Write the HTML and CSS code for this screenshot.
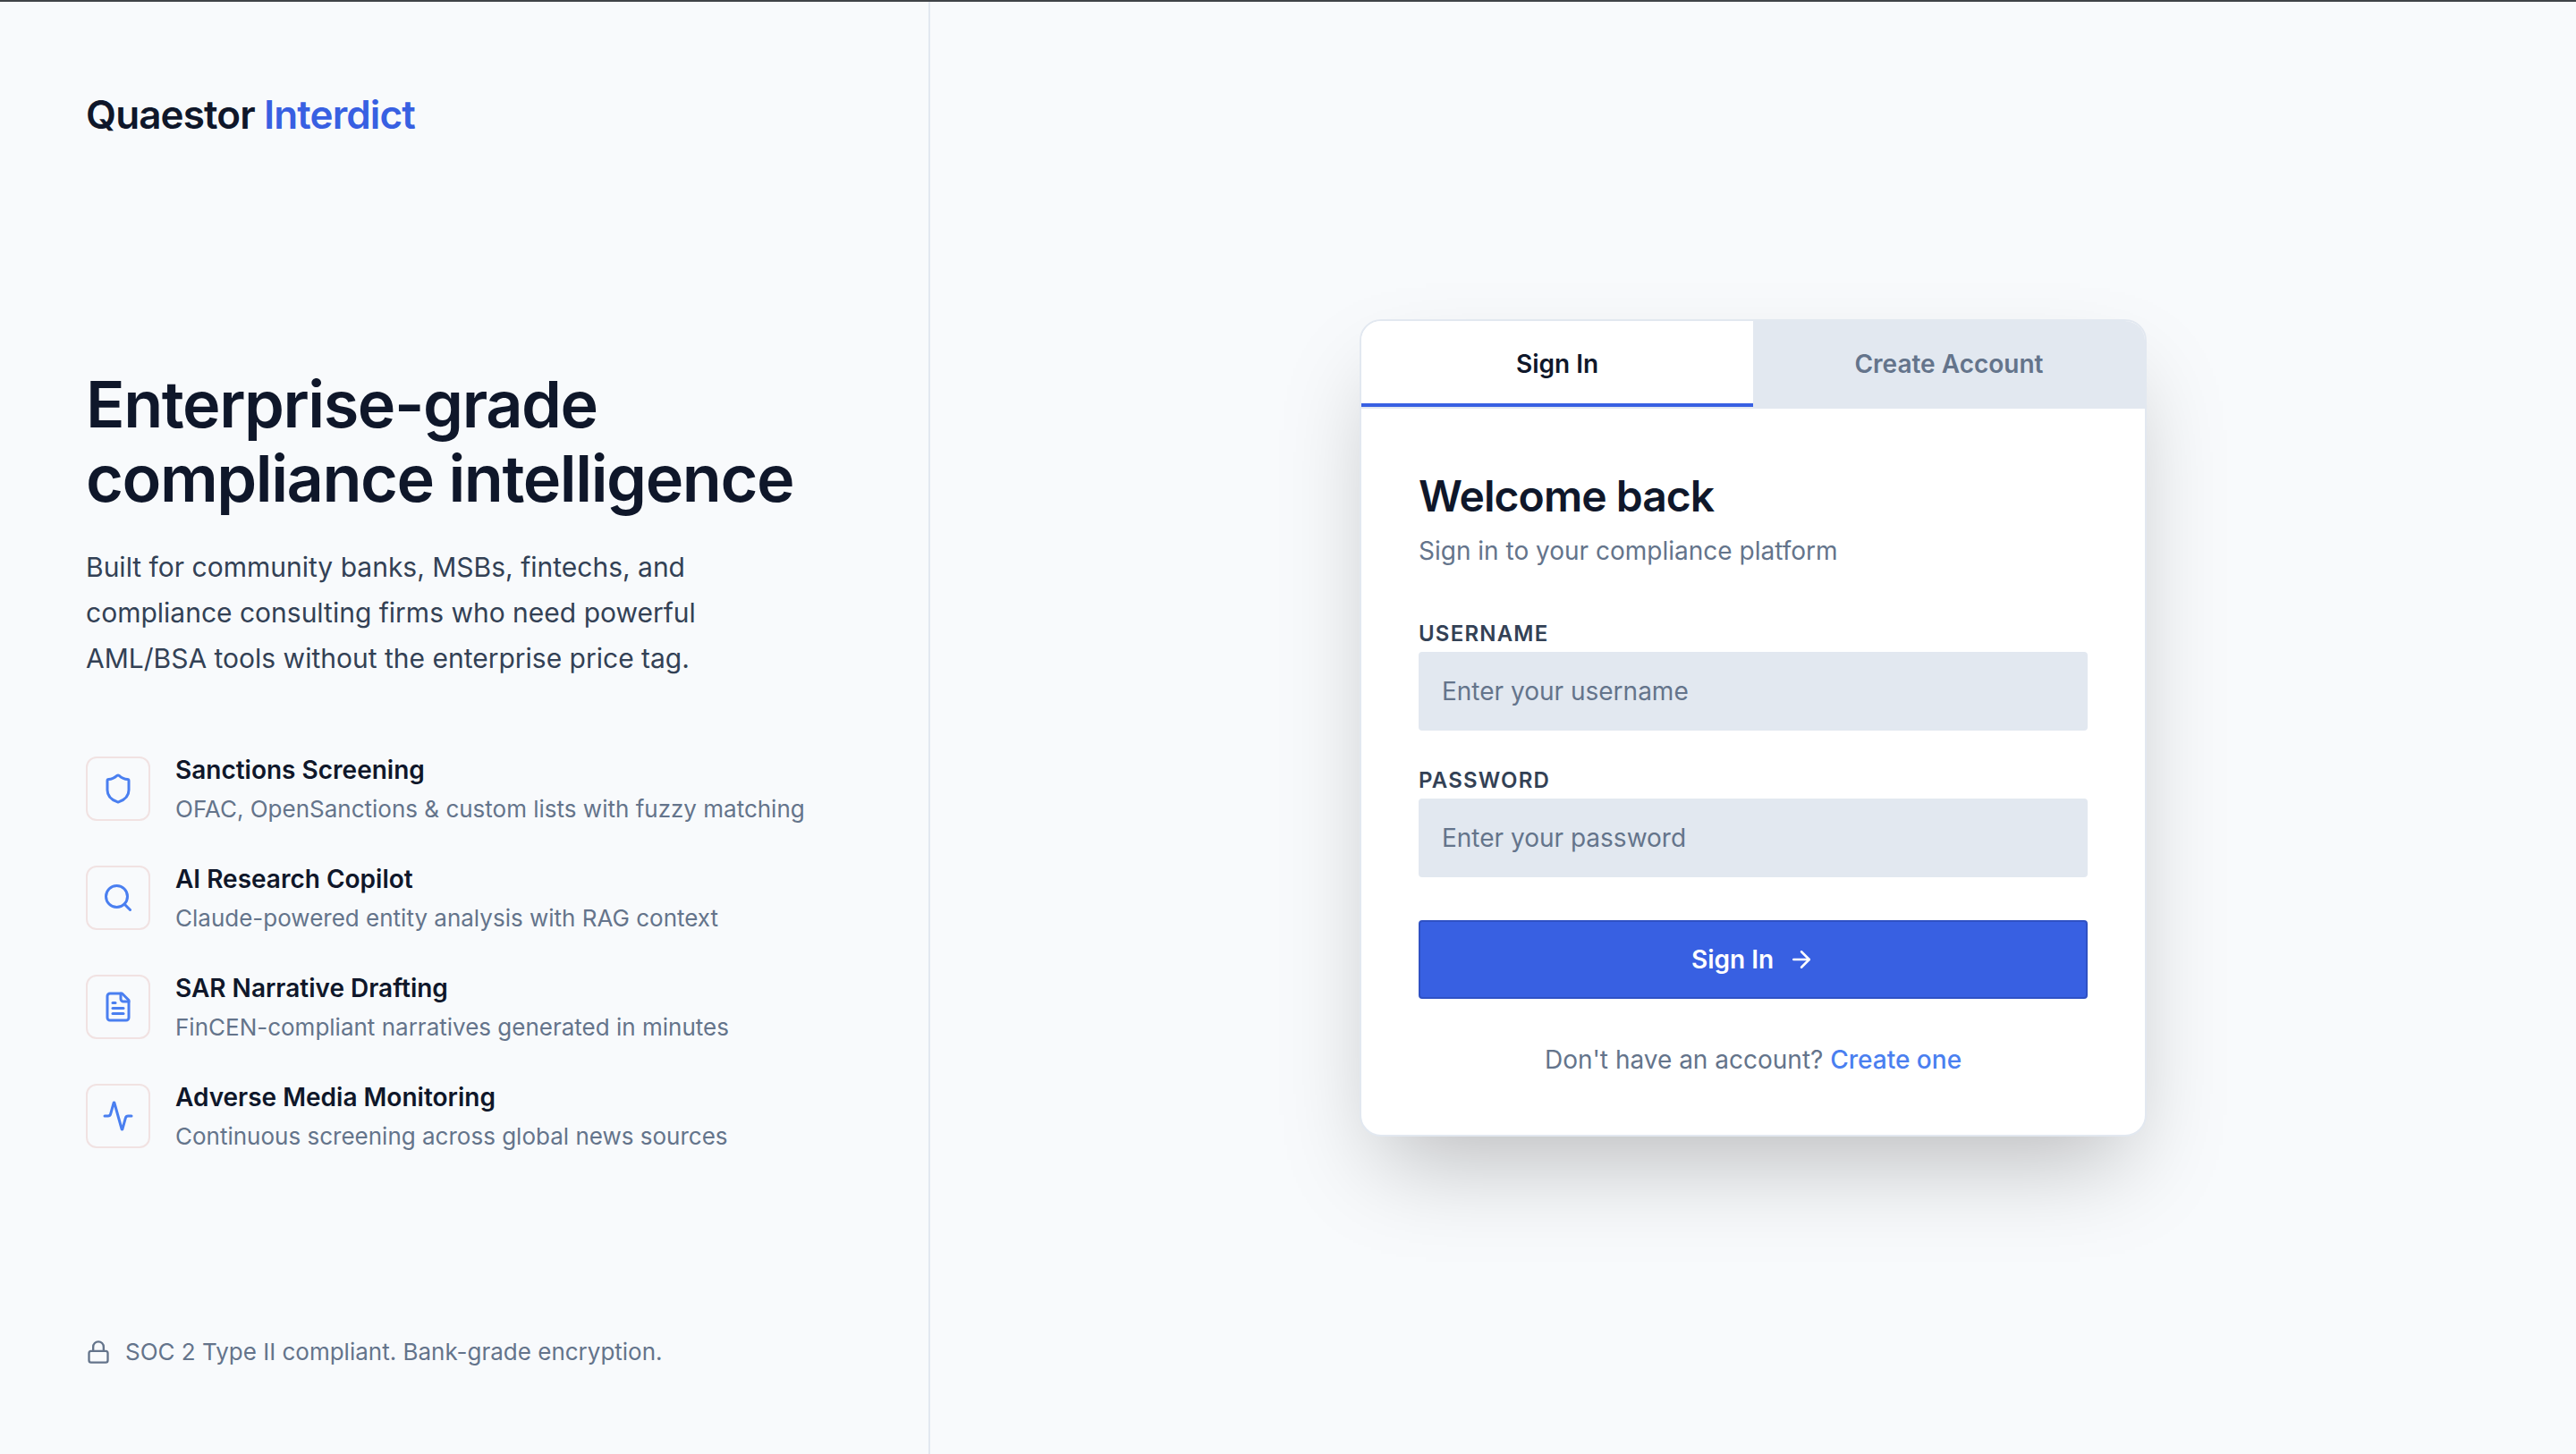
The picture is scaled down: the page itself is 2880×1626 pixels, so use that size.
FILE: index.html
```html
<!DOCTYPE html>
<html lang="en">
<head>
    <meta charset="UTF-8">
    <meta name="viewport" content="width=device-width, initial-scale=1.0">
    <title>Quaestor Interdict - Sign In</title>
    <link rel="stylesheet" href="styles.css">
</head>
<body>
    <div class="page">
        <aside class="brand-panel">
            <div class="logo">Quaestor <span class="logo-accent">Interdict</span></div>
            <div class="hero">
                <h1>Enterprise-grade<br>compliance intelligence</h1>
                <p class="hero-text">Built for community banks, MSBs, fintechs, and<br>compliance consulting firms who need powerful<br>AML/BSA tools without the enterprise price tag.</p>
                <ul class="features">
                    <li class="feature">
                        <span class="feature-icon">
                            <svg viewBox="0 0 24 24"><path d="M20 13c0 5-3.5 7.5-7.66 8.95a1 1 0 0 1-.67-.01C7.5 20.5 4 18 4 13V6a1 1 0 0 1 1-1c2 0 4.5-1.2 6.24-2.72a1.17 1.17 0 0 1 1.52 0C14.51 3.81 17 5 19 5a1 1 0 0 1 1 1z"/></svg>
                        </span>
                        <div>
                            <div class="feature-title">Sanctions Screening</div>
                            <div class="feature-text">OFAC, OpenSanctions &amp; custom lists with fuzzy matching</div>
                        </div>
                    </li>
                    <li class="feature">
                        <span class="feature-icon">
                            <svg viewBox="0 0 24 24"><circle cx="11" cy="11" r="8"/><path d="m21 21-4.3-4.3"/></svg>
                        </span>
                        <div>
                            <div class="feature-title">AI Research Copilot</div>
                            <div class="feature-text">Claude-powered entity analysis with RAG context</div>
                        </div>
                    </li>
                    <li class="feature">
                        <span class="feature-icon">
                            <svg viewBox="0 0 24 24"><path d="M15 2H6a2 2 0 0 0-2 2v16a2 2 0 0 0 2 2h12a2 2 0 0 0 2-2V7Z"/><path d="M14 2v4a2 2 0 0 0 2 2h4"/><path d="M10 9H8"/><path d="M16 13H8"/><path d="M16 17H8"/></svg>
                        </span>
                        <div>
                            <div class="feature-title">SAR Narrative Drafting</div>
                            <div class="feature-text">FinCEN-compliant narratives generated in minutes</div>
                        </div>
                    </li>
                    <li class="feature">
                        <span class="feature-icon">
                            <svg viewBox="0 0 24 24"><path d="M22 12h-2.48a2 2 0 0 0-1.93 1.46l-2.35 8.36a.25.25 0 0 1-.48 0L9.24 2.18a.25.25 0 0 0-.48 0l-2.35 8.36A2 2 0 0 1 4.49 12H2"/></svg>
                        </span>
                        <div>
                            <div class="feature-title">Adverse Media Monitoring</div>
                            <div class="feature-text">Continuous screening across global news sources</div>
                        </div>
                    </li>
                </ul>
            </div>
            <div class="compliance-note">
                <svg viewBox="0 0 24 24"><rect x="3" y="11" width="18" height="11" rx="2" ry="2"/><path d="M7 11V7a5 5 0 0 1 10 0v4"/></svg>
                SOC 2 Type II compliant. Bank-grade encryption.
            </div>
        </aside>
        <main class="form-panel">
            <div class="card">
                <div class="tabs">
                    <button type="button" class="tab tab-active">Sign In</button>
                    <button type="button" class="tab">Create Account</button>
                </div>
                <form class="card-body">
                    <h2>Welcome back</h2>
                    <p class="card-subtitle">Sign in to your compliance platform</p>
                    <label class="field-label" for="username">Username</label>
                    <input class="field-input" id="username" type="text" placeholder="Enter your username">
                    <label class="field-label" for="password">Password</label>
                    <input class="field-input" id="password" type="password" placeholder="Enter your password">
                    <button type="button" class="submit-button">
                        Sign In
                        <svg viewBox="0 0 24 24"><path d="M5 12h14"/><path d="m12 5 7 7-7 7"/></svg>
                    </button>
                    <p class="switch-text">Don't have an account? <a href="#">Create one</a></p>
                </form>
            </div>
        </main>
    </div>
</body>
</html>
```

FILE: styles.css
```css
* {
    box-sizing: border-box;
}
body {
    font-family: Inter, "Noto Sans", sans-serif;
    background-color: #f8fafc;
    color: #0f172a;
    margin: 0;
    padding: 0;
}
svg {
    fill: none;
    stroke: currentColor;
    stroke-width: 2;
    stroke-linecap: round;
    stroke-linejoin: round;
}
.page {
    display: flex;
    height: 1626px;
    border-top: 2px solid #3f4347;
}
.brand-panel {
    width: 1040px;
    flex-shrink: 0;
    display: flex;
    flex-direction: column;
    padding: 96px;
    border-right: 2px solid #e2e8f0;
}
.logo {
    font-size: 44px;
    font-weight: 600;
    line-height: 60px;
    letter-spacing: -0.88px;
    margin-bottom: 45px;
}
.logo-accent {
    color: #3860e2;
}
.hero {
    margin: auto 0;
}
h1 {
    font-size: 72px;
    font-weight: 600;
    line-height: 83px;
    letter-spacing: -1.44px;
    margin: 0 0 33px;
}
.hero-text {
    font-size: 30px;
    line-height: 51px;
    color: #334155;
    margin: 0 0 84px;
}
.features {
    list-style: none;
    margin: 0;
    padding: 0;
    display: flex;
    flex-direction: column;
    gap: 47px;
}
.feature {
    display: flex;
    gap: 28px;
}
.feature-icon {
    width: 72px;
    height: 72px;
    flex-shrink: 0;
    display: flex;
    align-items: center;
    justify-content: center;
    border: 2px solid #f1e2e2;
    border-radius: 12px;
    color: #4a7ff0;
}
.feature-icon svg {
    width: 36px;
    height: 36px;
}
.feature-title {
    font-size: 28px;
    font-weight: 600;
    line-height: 30px;
    margin-bottom: 13px;
}
.feature-text {
    font-size: 26px;
    line-height: 32px;
    color: #64748b;
}
.compliance-note {
    display: flex;
    align-items: center;
    gap: 16px;
    font-size: 26px;
    line-height: 36px;
    color: #64748b;
}
.compliance-note svg {
    width: 28px;
    height: 28px;
}
.form-panel {
    flex: 1;
    display: flex;
    align-items: center;
    justify-content: center;
}
.card {
    width: 880px;
    background-color: white;
    border: 2px solid #e2e8f0;
    border-radius: 24px;
    overflow: hidden;
    box-shadow: 0 50px 100px -24px rgba(0, 0, 0, 0.25);
}
.tabs {
    display: grid;
    grid-template-columns: 1fr 1fr;
    border-bottom: 2px solid #e2e8f0;
}
.tab {
    height: 96px;
    font-family: inherit;
    font-size: 28px;
    font-weight: 600;
    color: #64748b;
    background-color: #e2e8f0;
    border: none;
    border-bottom: 4px solid transparent;
    padding: 4px 0 0;
}
.tab-active {
    color: #0f172a;
    background-color: white;
    border-bottom-color: #3860e2;
}
.card-body {
    display: flex;
    flex-direction: column;
    padding: 64px;
}
h2 {
    font-size: 48px;
    font-weight: 600;
    line-height: 68px;
    letter-spacing: -0.96px;
    margin: 0 0 8px;
}
.card-subtitle {
    font-size: 28px;
    line-height: 38px;
    color: #64748b;
    margin: 0 0 58px;
}
.field-label {
    font-size: 24px;
    font-weight: 600;
    line-height: 32px;
    letter-spacing: 1.2px;
    text-transform: uppercase;
    color: #334155;
    margin-bottom: 4px;
}
.field-input {
    height: 88px;
    margin-bottom: 40px;
    padding: 0 24px;
    font-family: inherit;
    font-size: 28px;
    color: #0f172a;
    background-color: #e2e8f0;
    border: 2px solid #e2e8f0;
    border-radius: 4px;
}
.field-input::placeholder {
    color: #64748b;
    opacity: 1;
}
.submit-button {
    height: 88px;
    margin-top: 8px;
    display: flex;
    align-items: center;
    justify-content: center;
    gap: 16px;
    font-family: inherit;
    font-size: 28px;
    font-weight: 600;
    color: white;
    background-color: #3860e2;
    border: 2px solid #2f51c4;
    border-radius: 4px;
}
.submit-button svg {
    width: 30px;
    height: 30px;
}
.switch-text {
    font-size: 28px;
    line-height: 40px;
    text-align: center;
    color: #64748b;
    margin: 48px 0 0;
}
.switch-text a {
    color: #4a7ff0;
    font-weight: 500;
    text-decoration: none;
}
```
